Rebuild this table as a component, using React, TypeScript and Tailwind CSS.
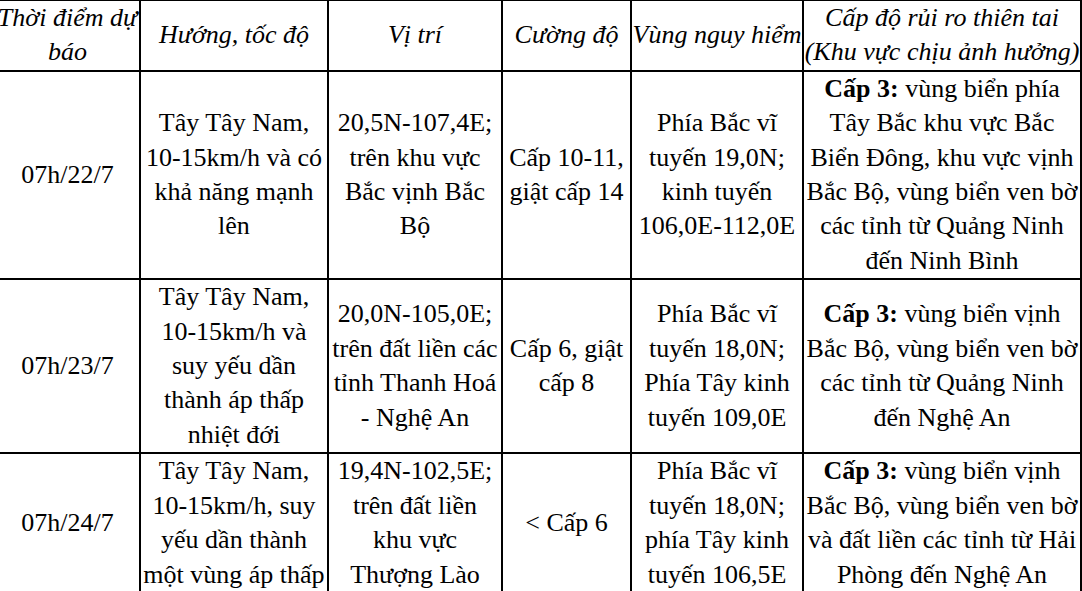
import React from "react";

type Row = {
  time: string;
  direction: string[];
  position: string[];
  strength: string[];
  danger: string[];
  risk: string[];
};

const rows: Row[] = [
  {
    time: "07h/22/7",
    direction: ["Tây Tây Nam,", "10-15km/h và có", "khả năng mạnh", "lên"],
    position: ["20,5N-107,4E;", "trên khu vực", "Bắc vịnh Bắc", "Bộ"],
    strength: ["Cấp 10-11,", "giật cấp 14"],
    danger: ["Phía Bắc vĩ", "tuyến 19,0N;", "kinh tuyến", "106,0E-112,0E"],
    risk: [
      "vùng biển phía",
      "Tây Bắc khu vực Bắc",
      "Biển Đông, khu vực vịnh",
      "Bắc Bộ, vùng biển ven bờ",
      "các tỉnh từ Quảng Ninh",
      "đến Ninh Bình",
    ],
  },
  {
    time: "07h/23/7",
    direction: ["Tây Tây Nam,", "10-15km/h và", "suy yếu dần", "thành áp thấp", "nhiệt đới"],
    position: ["20,0N-105,0E;", "trên đất liền các", "tỉnh Thanh Hoá", "- Nghệ An"],
    strength: ["Cấp 6, giật", "cấp 8"],
    danger: ["Phía Bắc vĩ", "tuyến 18,0N;", "Phía Tây kinh", "tuyến 109,0E"],
    risk: [
      "vùng biển vịnh",
      "Bắc Bộ, vùng biển ven bờ",
      "các tỉnh từ Quảng Ninh",
      "đến Nghệ An",
    ],
  },
  {
    time: "07h/24/7",
    direction: ["Tây Tây Nam,", "10-15km/h, suy", "yếu dần thành", "một vùng áp thấp"],
    position: ["19,4N-102,5E;", "trên đất liền", "khu vực", "Thượng Lào"],
    strength: ["< Cấp 6"],
    danger: ["Phía Bắc vĩ", "tuyến 18,0N;", "phía Tây kinh", "tuyến 106,5E"],
    risk: [
      "vùng biển vịnh",
      "Bắc Bộ, vùng biển ven bờ",
      "và đất liền các tỉnh từ Hải",
      "Phòng đến Nghệ An",
    ],
  },
];

export default function App() {
  return (
    <div className="h-[591px] w-[1082px] overflow-hidden bg-white [font-family:'Liberation_Serif','Times_New_Roman',serif] text-[26px] leading-[34.4px] text-black">
      <div className="-ml-[6px] -mt-[1px] grid w-max grid-cols-[143px_186px_172px_127px_170px_276px] gap-[2px] bg-black p-[2px]">
        {/* Header */}
        <Cell italic lines={["Thời điểm dự", "báo"]} />
        <Cell italic lines={["Hướng, tốc độ"]} />
        <Cell italic lines={["Vị trí"]} />
        <Cell italic lines={["Cường độ"]} />
        <Cell italic lines={["Vùng nguy hiểm"]} />
        <Cell italic lines={["Cấp độ rủi ro thiên tai", "(Khu vực chịu ảnh hưởng)"]} />

        {rows.map((r) => (
          <React.Fragment key={r.time}>
            <Cell lines={[r.time]} />
            <Cell lines={r.direction} />
            <Cell lines={r.position} />
            <Cell lines={r.strength} />
            <Cell lines={r.danger} />
            <Cell lines={r.risk} boldLead="Cấp 3:" />
          </React.Fragment>
        ))}
      </div>
    </div>
  );
}

function Cell({
  lines,
  italic,
  boldLead,
}: {
  lines: string[];
  italic?: boolean;
  boldLead?: string;
}) {
  return (
    <div
      className={`flex flex-col items-center justify-center overflow-hidden bg-white text-center ${
        italic ? "italic" : ""
      }`}
    >
      {lines.map((line, i) => (
        <div key={i} className="whitespace-nowrap">
          {i === 0 && boldLead ? (
            <>
              <span className="font-bold">{boldLead}</span> {line}
            </>
          ) : (
            line
          )}
        </div>
      ))}
    </div>
  );
}
